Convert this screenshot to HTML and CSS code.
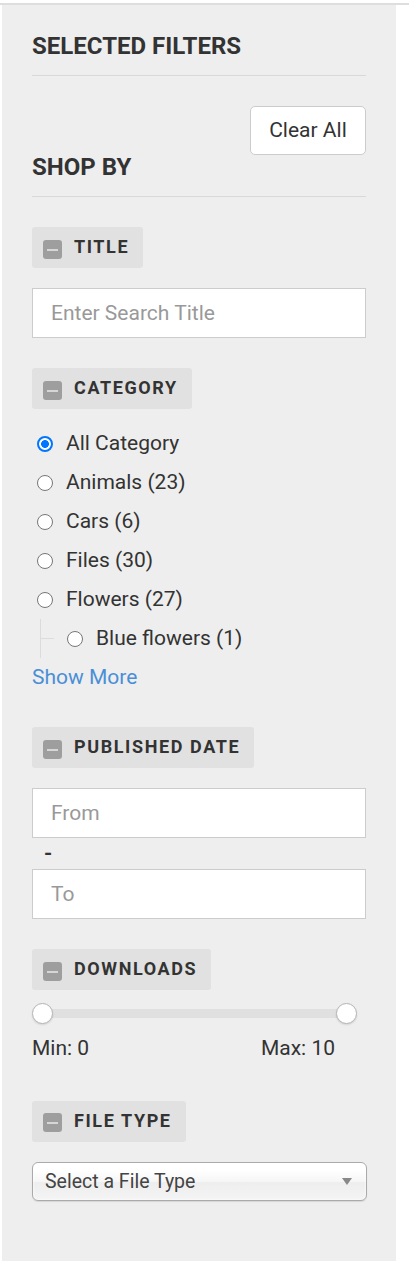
FILE: index.html
```html
<!DOCTYPE html>
<html lang="en">
<head>
<meta charset="utf-8">
<title>Filters</title>
<link rel="stylesheet" href="styles.css">
</head>
<body>
<div class="page">
  <aside class="panel">
    <h2 class="block-title">SELECTED FILTERS</h2>
    <div class="clear-row"><button class="btn-clear" type="button">Clear All</button></div>
    <h2 class="block-title shop-by">SHOP BY</h2>

    <section class="filter">
      <div class="filter-head"><span class="toggle"></span><span class="head-text">TITLE</span></div>
      <input class="text-input" type="text" placeholder="Enter Search Title">
    </section>

    <section class="filter">
      <div class="filter-head"><span class="toggle"></span><span class="head-text">CATEGORY</span></div>
      <ul class="cat-list">
        <li><label><input type="radio" name="cat" checked>All Category</label></li>
        <li><label><input type="radio" name="cat">Animals (23)</label></li>
        <li><label><input type="radio" name="cat">Cars (6)</label></li>
        <li><label><input type="radio" name="cat">Files (30)</label></li>
        <li><label><input type="radio" name="cat">Flowers (27)</label>
          <ul class="sub-list">
            <li><label><input type="radio" name="cat">Blue flowers (1)</label></li>
          </ul>
        </li>
      </ul>
      <a class="show-more" href="#">Show More</a>
    </section>

    <section class="filter">
      <div class="filter-head"><span class="toggle"></span><span class="head-text">PUBLISHED DATE</span></div>
      <input class="text-input" type="text" placeholder="From">
      <div class="dash">-</div>
      <input class="text-input to-input" type="text" placeholder="To">
    </section>

    <section class="filter">
      <div class="filter-head"><span class="toggle"></span><span class="head-text">DOWNLOADS</span></div>
      <div class="slider">
        <div class="track"></div>
        <span class="handle handle-min"></span>
        <span class="handle handle-max"></span>
      </div>
      <div class="range-labels"><span>Min: 0</span><span>Max: 10</span></div>
    </section>

    <section class="filter filter-type">
      <div class="filter-head"><span class="toggle"></span><span class="head-text">FILE TYPE</span></div>
      <div class="chosen-single"><span>Select a File Type</span><span class="arrow"></span></div>
    </section>
  </aside>
</div>
</body>
</html>
```
FILE: styles.css
```css
* { box-sizing: border-box; }
html, body { margin: 0; padding: 0; background: #fff; }
body {
  padding-top: 3px;
  font-family: Roboto, "Liberation Sans", Arial, sans-serif;
  font-size: 21px;
  color: #333;
}
.page {
  border-top: 2px solid #dedede;
  height: 1267px;
}
.panel {
  margin-left: 2px;
  width: 394px;
  background: #eee;
  padding: 27px 30px 60px;
}
.block-title {
  margin: 0;
  font-size: 24px;
  line-height: 28px;
  font-weight: 700;
  color: #333;
  padding-bottom: 15px;
  border-bottom: 1px solid #d8d8d8;
}
.clear-row {
  display: flex;
  justify-content: flex-end;
  margin-top: 30px;
}
.btn-clear {
  font-family: inherit;
  font-size: 21px;
  color: #333;
  background: #fff;
  border: 1px solid #ccc;
  border-radius: 5px;
  height: 49px;
  width: 116px;
  padding: 0;
  line-height: 47px;
}
.shop-by { margin-top: -2px; }

.filter { margin-top: 30px; }
.filter-head {
  display: flex;
  align-items: center;
  width: max-content;
  height: 41px;
  padding: 0 14px 0 11px;
  background: #e1e1e1;
  border-radius: 3px;
}
.toggle {
  position: relative;
  width: 19px;
  height: 19px;
  margin-top: 3px;
  background: #9e9e9e;
  border-radius: 3px;
  margin-right: 12px;
}
.toggle::after {
  content: "";
  position: absolute;
  left: 4px;
  right: 4px;
  top: 9px;
  height: 2px;
  background: #d6d6d6;
}
.head-text {
  font-size: 18px;
  font-weight: 700;
  letter-spacing: 1.6px;
  color: #333;
  padding-bottom: 2px;
}
.text-input {
  display: block;
  width: 100%;
  height: 50px;
  margin-top: 20px;
  border: 1px solid #ccc;
  background: #fff;
  padding: 0 18px;
  font-family: inherit;
  font-size: 21px;
  color: #333;
  outline: none;
}
.text-input::placeholder { color: #999; }
.dash {
  height: 31px;
  line-height: 31px;
  padding-left: 12px;
  font-size: 21px;
  font-weight: 700;
  color: #333;
}
.text-input.to-input { margin-top: 0; }

.cat-list, .sub-list {
  list-style: none;
  margin: 0;
  padding: 0;
}
.cat-list { margin-top: 15px; }
.cat-list li { line-height: 39px; }
.cat-list label {
  display: flex;
  align-items: center;
  height: 39px;
}
.cat-list input[type="radio"] {
  -webkit-appearance: none;
  appearance: none;
  width: 16px;
  height: 16px;
  margin: 0 13px 0 5px;
  flex: none;
  border: 1px solid #767676;
  border-radius: 50%;
  background: #fff;
}
.cat-list input[type="radio"]:checked {
  border: 2px solid #0075ff;
  background: radial-gradient(circle, #0075ff 0 3.6px, #fff 4.2px);
}
.sub-list {
  margin-left: 8px;
  border-left: 1px solid #dcdcdc;
  padding-left: 21px;
}
.sub-list li { position: relative; }
.sub-list li::before {
  content: "";
  position: absolute;
  left: -22px;
  top: 19px;
  width: 14px;
  height: 1px;
  background: #dcdcdc;
}
.show-more {
  display: block;
  line-height: 39px;
  color: #4a8fd6;
  text-decoration: none;
}

.slider {
  position: relative;
  margin-top: 13px;
  margin-right: 9px;
  height: 21px;
  padding-top: 6px;
}
.track {
  height: 9px;
  margin: 0 10px;
  background: #e0e0e0;
}
.handle {
  position: absolute;
  top: 0;
  width: 21px;
  height: 21px;
  border-radius: 50%;
  background: #fff;
  border: 1px solid #b5b5b5;
  box-shadow: 0 1px 2px rgba(0,0,0,0.12);
}
.handle-min { left: 0; }
.handle-max { right: 0; }
.range-labels {
  display: flex;
  justify-content: space-between;
  padding-right: 31px;
  margin-top: 9px;
  line-height: 31.5px;
}
.filter-type { margin-top: 36px; }
.filter-type .filter-head { margin-bottom: 20px; }
.chosen-single {
  position: relative;
  display: flex;
  align-items: center;
  height: 39px;
  width: 335px;
  padding-left: 12px;
  border: 1px solid #aaa;
  border-radius: 6px;
  background: linear-gradient(#fff 20%, #f6f6f6 50%, #eee 52%, #f4f4f4 100%);
  box-shadow: 0 0 3px #fff inset, 0 1px 1px rgba(0,0,0,0.1);
  font-size: 19.5px;
  color: #444;
}
.arrow {
  position: absolute;
  right: 14px;
  top: 15px;
  width: 0;
  height: 0;
  border-left: 5px solid transparent;
  border-right: 5px solid transparent;
  border-top: 7px solid #888;
}
```
